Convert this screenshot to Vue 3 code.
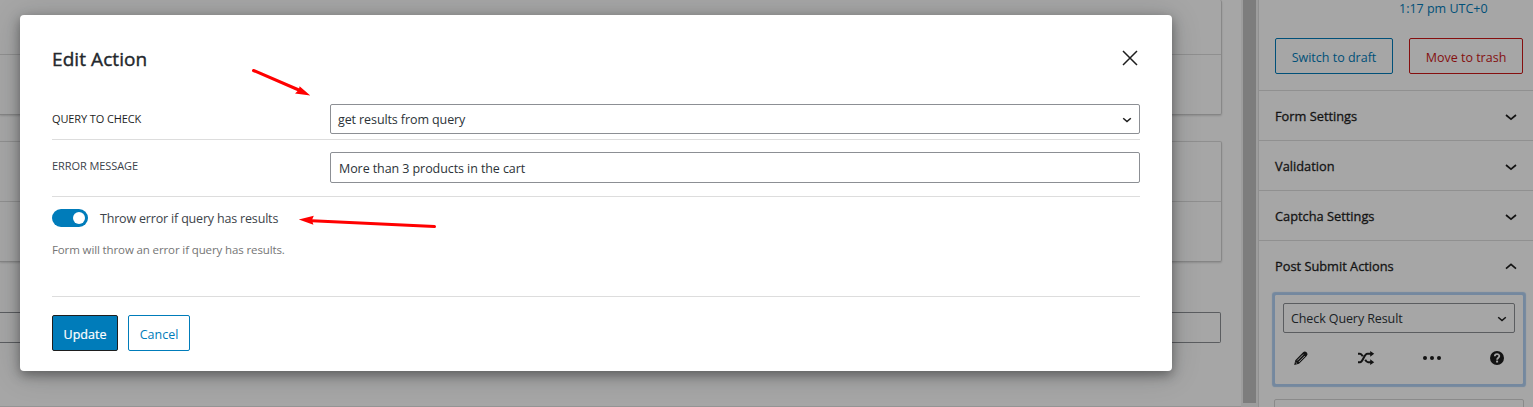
<script setup>
const panels = [
  { title: 'Form Settings', open: false },
  { title: 'Validation', open: false },
  { title: 'Captcha Settings', open: false },
  { title: 'Post Submit Actions', open: true },
]
</script>

<template>
  <div class="screen">
    <div class="page">
      <main class="editor">
        <div class="card first"><div class="card-top"></div></div>
        <div class="card"><div class="card-top"></div></div>
        <div class="field"></div>
      </main>
      <div class="scroll"><div class="thumb"></div></div>
      <aside class="sidebar">
        <div class="status">
          <a class="time">1:17 pm UTC+0</a>
          <div class="status-actions">
            <button class="btn outline draft">Switch to draft</button>
            <button class="btn outline trash">Move to trash</button>
          </div>
        </div>
        <div v-for="p in panels" :key="p.title" class="panel">
          <span>{{ p.title }}</span>
          <svg width="12" height="8" viewBox="0 0 12 8">
            <path :d="p.open ? 'M1 5.6 6 1.4 11 5.6' : 'M1 2 6 6.2 11 2'" />
          </svg>
        </div>
        <div class="action">
          <div class="select small">
            <span>Check Query Result</span>
            <svg width="10" height="8" viewBox="0 0 10 8"><path d="M1.2 2.2 5 5.6 8.8 2.2" /></svg>
          </div>
          <div class="icons">
            <svg width="16" height="16" viewBox="0 0 16 16">
              <path d="M1.2 14.9 2.3 10.3 10.1 2.3Q11.8.7 13.5 2.3L14 2.8Q15.3 4.4 13.7 6L6 13.7Z" fill="#1e1e1e" />
              <path d="M4.2 10.5 10.2 4.5M5.8 12 11.8 6" stroke="#fff" stroke-width=".9" />
              <path d="m2.6 12.3 1.5 1.4" stroke="#fff" stroke-width=".7" />
            </svg>
            <svg class="shuffle" width="18" height="16" viewBox="0 0 18 16">
              <path d="M1 3.8H3C4.4 3.8 5 5 5.8 6.3M8.2 9.8C9 11.2 9.6 12.2 11 12.2H14M1 12.2H3C6 12.2 7 3.8 10.4 3.8H14" fill="none" stroke="#1e1e1e" stroke-width="2" />
              <path d="M13.2.9 17.2 3.8 13.2 6.7ZM13.2 9.3 17.2 12.2 13.2 15.1Z" fill="#1e1e1e" />
            </svg>
            <svg width="20" height="16" viewBox="0 0 20 16" fill="#1e1e1e">
              <circle cx="3" cy="8" r="2" /><circle cx="10" cy="8" r="2" /><circle cx="17" cy="8" r="2" />
            </svg>
            <svg width="16" height="16" viewBox="0 0 16 16">
              <circle cx="8" cy="8" r="7" fill="#1e1e1e" />
              <path d="M5.8 6.3C5.8 3.4 10.3 3.5 10.3 6.1 10.3 7.8 8.1 7.7 8.1 9.7" fill="none" stroke="#fff" stroke-width="1.8" />
              <rect x="7.1" y="10.6" width="2" height="1.9" fill="#fff" />
            </svg>
          </div>
        </div>
        <div class="action-next"></div>
      </aside>
    </div>

    <div class="overlay">
      <section class="modal">
        <header class="modal-head">
          <h1>Edit Action</h1>
          <svg width="16" height="16" viewBox="0 0 16 16"><path d="M1 1 15 15M15 1 1 15" /></svg>
        </header>
        <div class="row query">
          <label>QUERY TO CHECK</label>
          <div class="select">
            <span class="t-query">get results from query</span>
            <svg width="10" height="8" viewBox="0 0 10 8"><path d="M1.2 2.2 5 5.6 8.8 2.2" /></svg>
          </div>
        </div>
        <div class="row message">
          <label>ERROR MESSAGE</label>
          <div class="input">More than 3 products in the cart</div>
        </div>
        <div class="toggle-row">
          <span class="toggle"><i></i></span>
          <span class="toggle-label">Throw error if query has results</span>
        </div>
        <p class="help">Form will throw an error if query has results.</p>
        <footer>
          <button class="btn primary">Update</button>
          <button class="btn outline cancel">Cancel</button>
        </footer>
      </section>
      <svg class="arrows" width="1533" height="407" viewBox="0 0 1533 407">
        <path d="M253.5 70.5 300 90.5M434.5 226.6 312 220.7" stroke="#f00" stroke-width="3" stroke-linecap="round" />
        <path d="M310.3 95.6 299.6 86.2 298.8 90 295 93.4ZM298.8 219.4 313.8 215.8 312 220 313.4 224.8Z" fill="#f00" />
      </svg>
    </div>
  </div>
</template>

<style>
body { margin: 0; overflow: hidden; }
</style>

<style scoped>
* { box-sizing: border-box; }
.screen {
  position: relative;
  width: 1533px;
  height: 407px;
  overflow: hidden;
  background: #fff;
  color: #1e1e1e;
  font: 12.5px/18px "Open Sans", "Noto Sans", sans-serif;
}
.page { display: flex; height: 407px; }
.editor { width: 1241px; height: 407px; border-bottom: 1px solid #e4e4e4; flex: none; }
.card {
  width: 1222px;
  height: 121px;
  margin-top: 26px;
  border: 1px solid #dcdcdc;
  border-left: 0;
  border-right: 1px solid #d2d2d2;
  border-bottom-color: #ccc;
  border-radius: 0 2px 2px 0;
  box-shadow: 0 1px 2px rgba(0, 0, 0, .15);
}
.card-top { height: 60px; border-bottom: 1px solid #dcdcdc; }
.card.first { margin-top: 0; height: 115px; border-top: 0; }
.card.first .card-top { height: 55px; }
.field { width: 1221px; height: 31px; margin-top: 50px; border: 1px solid #8c8f94; border-left: 0; border-radius: 0 2px 2px 0; }
.scroll { width: 17px; flex: none; padding: 0 2px; background: #f1f1f1; }
.thumb { width: 13px; height: 403px; background: #c1c1c1; }
.sidebar { width: 275px; flex: none; height: 407px; overflow: hidden; border-left: 1px solid #ddd; }
.status { height: 90px; padding: 0 10px 0 16px; }
.time { display: block; margin-left: 124px; height: 38px; line-height: 18px; color: #007cba; white-space: nowrap; }
.status-actions { display: flex; gap: 16px; }
.btn {
  display: flex;
  align-items: center;
  justify-content: center;
  height: 36px;
  padding: 4px 0 0;
  border: 1px solid #007cba;
  border-radius: 2px;
  background: transparent;
  color: #007cba;
  font: inherit;
  white-space: nowrap;
}
.draft { width: 118px; }
.trash { width: 114px; border-color: #cc1818; color: #cc1818; }
.panel {
  display: flex;
  align-items: center;
  justify-content: space-between;
  height: 50px;
  padding: 1px 16px 0;
  border-top: 1px solid #ddd;
  font-size: 12.8px;
  font-weight: 500;
  -webkit-text-stroke: .3px currentColor;
}
.panel span { padding-bottom: 1px; }
.panel svg { margin-top: 1px; }
.panel svg path { fill: none; stroke: #1e1e1e; stroke-width: 1.7; }
.action {
  width: 248px;
  height: 89px;
  margin: 5px 0 0 16px;
  padding: 8px;
  border-radius: 1px;
  box-shadow: 0 0 0 2px #b3d2f4, 0 0 1px 3px #b3d2f4;
}
.select {
  display: flex;
  align-items: center;
  justify-content: space-between;
  flex: none;
  width: 810px;
  height: 30px;
  padding: 0 7px;
  border: 1px solid #8c8f94;
  border-radius: 2px;
  color: #2c3338;
}
.select span { padding-top: 2px; }
.select svg { margin-top: 1px; }
.select svg path { fill: none; stroke: #1e1e1e; stroke-width: 1.5; }
.select.small { width: 232px; letter-spacing: -.1px; }
.t-query { letter-spacing: -.1px; }
.icons { display: flex; justify-content: space-between; height: 50px; padding: 0 10px; align-items: center; }
.shuffle { margin: 0 -1px 0 1px; }
.action-next { width: 250px; height: 30px; margin: 15px 0 0 15px; border: 1px solid #d5d5d5; border-radius: 2px; }
.overlay { position: absolute; inset: 0; padding: 15px 20px; background: rgba(0, 0, 0, .35); }
.modal {
  width: 1152px;
  height: 356px;
  padding: 0 32px;
  background: #fff;
  border-radius: 4px;
  box-shadow: 0 3px 30px rgba(25, 30, 35, .2), 0 4px 12px rgba(0, 0, 0, .38);
}
.modal-head { display: flex; justify-content: space-between; align-items: center; height: 88px; padding-right: 2px; }
h1 { margin: 0; font-size: 19px; line-height: 26px; font-weight: 500; letter-spacing: .08px; color: #23282d; -webkit-text-stroke: .4px currentColor; }
.modal-head svg { margin-bottom: 2px; }
.modal-head svg path { stroke: #1e1e1e; stroke-width: 1.5; }
.row { display: flex; justify-content: space-between; border-bottom: 1px solid #ddd; }
.query { height: 37px; padding-top: 1px; }
.message { height: 57px; padding-top: 12px; }
label { font-size: 11px; line-height: 18px; letter-spacing: -.12px; }
.query label { padding-top: 6px; }
.message label { padding-top: 5px; color: #3c434a; letter-spacing: -.08px; }
.input { width: 810px; height: 31px; padding: 1px 8px 0; border: 1px solid #8c8f94; border-radius: 2px; line-height: 30px; color: #2c3338; letter-spacing: -.08px; }
.toggle-row { display: flex; align-items: center; gap: 12px; height: 18px; margin-top: 12px; color: #3c434a; letter-spacing: -.18px; }
.toggle { display: flex; justify-content: flex-end; align-items: center; width: 36px; height: 18px; padding-right: 3px; border-radius: 9px; background: #007cba; }
.toggle i { width: 12px; height: 12px; border-radius: 50%; background: #fff; }
.toggle-label { padding-top: 2px; }
.help { margin: 14px 0 0; height: 55px; font-size: 11.5px; line-height: 18px; color: #757575; letter-spacing: -.12px; }
footer { display: flex; gap: 10px; padding-top: 18px; border-top: 1px solid #ddd; }
.primary { width: 66px; border-color: #1e1e1e; background: #007cba; color: #fff; font-weight: 500; -webkit-text-stroke: .2px currentColor; }
.cancel { width: 62px; }
.arrows { position: absolute; inset: 0; }
</style>
